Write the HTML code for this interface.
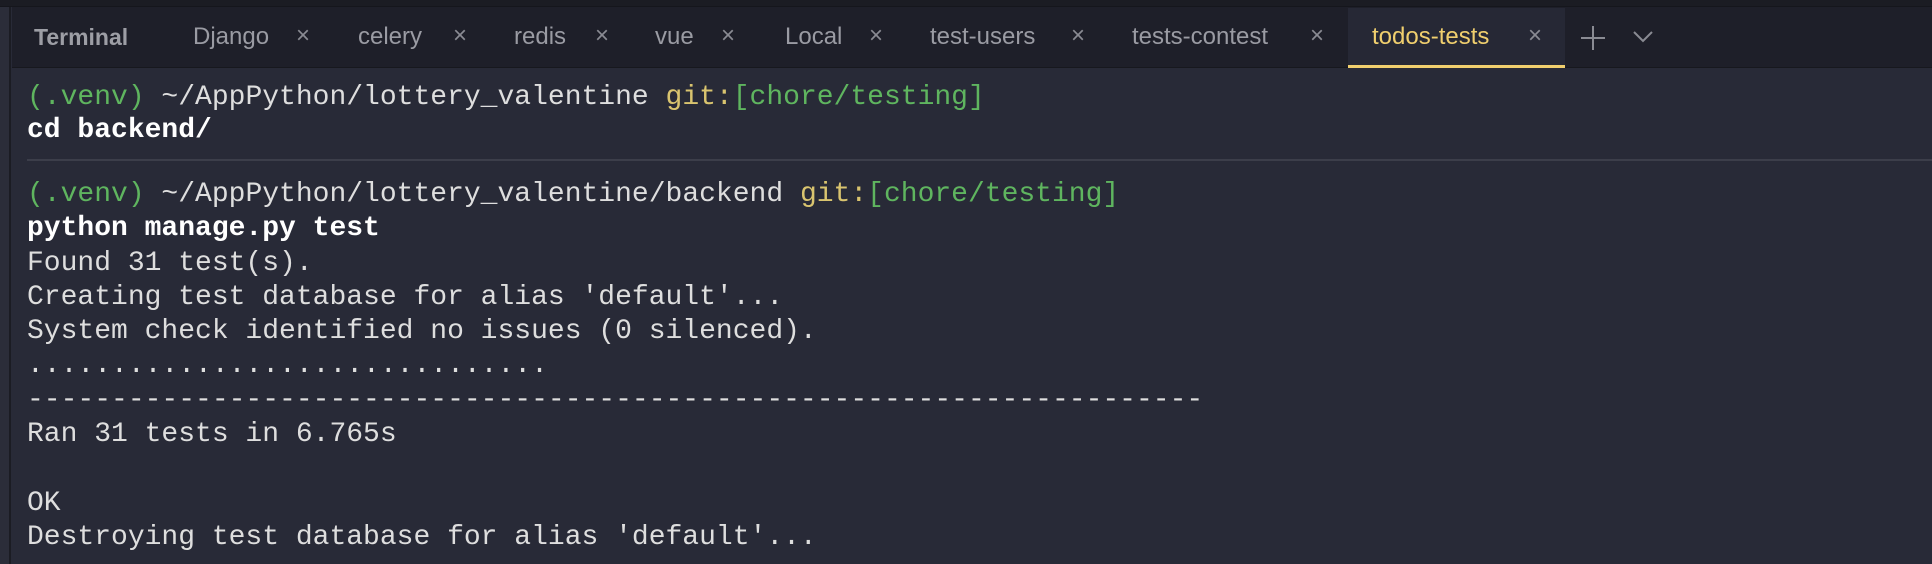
<!DOCTYPE html>
<html><head><meta charset="utf-8"><style>
html,body{margin:0;padding:0;width:1932px;height:564px;overflow:hidden;background:#282a37;}
.top{position:absolute;left:0;top:0;width:1932px;height:6px;background:#1b1c23;border-bottom:1px solid #15161c;}
.bar{position:absolute;left:12px;top:7px;width:1920px;height:60px;background:#1e1f29;border-bottom:1px solid #17181e;}
.side{position:absolute;left:0;top:7px;width:9px;height:557px;background:#2b2d39;border-right:2px solid #1b1c23;}
.tab{position:absolute;top:22px;font-family:"Liberation Sans",sans-serif;font-size:24px;color:#9a9ba3;line-height:30px;white-space:nowrap;}
.x{position:absolute;top:22px;font-family:"Liberation Sans",sans-serif;font-size:24px;color:#8a8b93;}
.active{position:absolute;left:1348px;top:8px;width:217px;height:57px;background:#262835;border-bottom:3px solid #f0cf6e;}
.term{position:absolute;left:27px;font-family:"Liberation Mono",monospace;font-size:28px;line-height:34.3px;color:#dedede;white-space:pre;}
.g{color:#5fb55f}.y{color:#d9c46f}.b{font-weight:bold;color:#fff}
.sep{position:absolute;left:27px;right:0;top:159px;height:2px;background:#3c3e4a;}
</style></head><body>
<div class="top"></div>
<div class="bar"></div>
<div class="active"></div>
<div class="side"></div>
<div class="tab" style="left:34px;font-weight:bold;color:#9d9ea5;font-size:23px">Terminal</div>
<div class="tab" style="left:193px">Django</div><div class="x" style="left:296px">×</div>
<div class="tab" style="left:358px">celery</div><div class="x" style="left:453px">×</div>
<div class="tab" style="left:514px">redis</div><div class="x" style="left:595px">×</div>
<div class="tab" style="left:655px">vue</div><div class="x" style="left:721px">×</div>
<div class="tab" style="left:785px">Local</div><div class="x" style="left:869px">×</div>
<div class="tab" style="left:930px">test-users</div><div class="x" style="left:1071px">×</div>
<div class="tab" style="left:1132px">tests-contest</div><div class="x" style="left:1310px">×</div>
<div class="tab" style="left:1372px;color:#f0cf6e">todos-tests</div><div class="x" style="left:1528px">×</div>
<svg style="position:absolute;left:1579px;top:24px" width="28" height="28"><path d="M14 2V26M2 14H26" stroke="#8a8b93" stroke-width="2"/></svg>
<svg style="position:absolute;left:1632px;top:30px" width="22" height="14"><path d="M2 2L11 11L20 2" stroke="#8a8b93" stroke-width="2" fill="none"/></svg>
<div class="sep"></div>
<div class="term" style="top:81px;line-height:33px"><span class="g">(.venv)</span> ~/AppPython/lottery_valentine <span class="y">git:</span><span class="g">[chore/testing]</span>
<span class="b">cd backend/</span></div>
<div class="term" style="top:178px"><span class="g">(.venv)</span> ~/AppPython/lottery_valentine/backend <span class="y">git:</span><span class="g">[chore/testing]</span>
<span class="b">python manage.py test</span>
Found 31 test(s).
Creating test database for alias 'default'...
System check identified no issues (0 silenced).
...............................
----------------------------------------------------------------------
Ran 31 tests in 6.765s

OK
Destroying test database for alias 'default'...</div>
</body></html>
